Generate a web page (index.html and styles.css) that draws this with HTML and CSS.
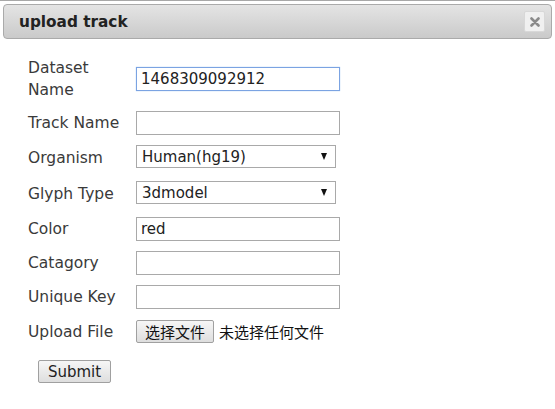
FILE: index.html
```html
<!DOCTYPE html>
<html>
<head>
<meta charset="utf-8">
<link rel="stylesheet" href="styles.css">
</head>
<body>
<div class="dialog">
  <div class="titlebar">
    <span class="title">upload track</span>
    <span class="close"><svg width="10" height="10" viewBox="0 0 10 10"><path d="M1.5 1.5 L8.5 8.5 M8.5 1.5 L1.5 8.5" stroke="#8a8a8a" stroke-width="2.6" stroke-linecap="round"/></svg></span>
  </div>
  <form class="form">
    <div class="grid">
      <label class="lbl two">Dataset<br>Name</label>
      <div class="cell"><input class="txt focus" type="text" value="1468309092912"></div>

      <label class="lbl">Track Name</label>
      <div class="cell"><input class="txt" type="text"></div>

      <label class="lbl sel-row">Organism</label>
      <div class="cell sel-row"><div class="sel"><span>Human(hg19)</span><i class="arrow"></i></div></div>

      <label class="lbl sel-row">Glyph Type</label>
      <div class="cell sel-row"><div class="sel"><span>3dmodel</span><i class="arrow"></i></div></div>

      <label class="lbl">Color</label>
      <div class="cell"><input class="txt" type="text" value="red"></div>

      <label class="lbl">Catagory</label>
      <div class="cell"><input class="txt" type="text"></div>

      <label class="lbl">Unique Key</label>
      <div class="cell"><input class="txt" type="text"></div>

      <label class="lbl file-row">Upload File</label>
      <div class="cell file-row"><span class="btn filebtn">选择文件</span><span class="nofile">未选择任何文件</span></div>
    </div>
    <div class="submit-row"><span class="btn submit">Submit</span></div>
  </form>
</div>
</body>
</html>
```
FILE: styles.css
```css
html, body {
  margin: 0;
  padding: 0;
  background: #fff;
}
body {
  font-family: "DejaVu Sans", Verdana, sans-serif;
  color: #333;
  width: 555px;
  height: 409px;
  overflow: hidden;
}
.dialog {
  border-top: 1px solid #a8a8a8;
  padding: 3px 3px 0 3px;
}
.titlebar {
  height: 33px;
  border: 1px solid #aaa;
  border-radius: 4px;
  background: linear-gradient(#e4e4e4, #cacaca);
  display: flex;
  align-items: center;
  justify-content: space-between;
  padding: 0 6px 0 15px;
}
.title {
  font-weight: bold;
  font-size: 15.3px;
  color: #222;
}
.close {
  width: 19px;
  height: 19px;
  background: #f0f0f0;
  border: 1px solid #d8d8d8;
  border-radius: 2px;
  display: flex;
  align-items: center;
  justify-content: center;
}
.form {
  padding: 18px 0 0 25px;
}
.grid {
  display: grid;
  grid-template-columns: 108px 220px;
  row-gap: 10px;
  align-items: center;
}
.lbl {
  font-size: 15.5px;
  line-height: 22px;
  color: #3a3a3a;
}
.cell {
  display: flex;
  align-items: center;
  height: 24px;
}
.sel-row.cell { height: 26px; align-items: flex-start; }
.file-row.cell { height: 25px; }
.txt {
  box-sizing: border-box;
  width: 204px;
  height: 24px;
  margin: 0;
  border: 1px solid #a9a9a9;
  padding: 0 4px;
  font-family: "DejaVu Sans", Verdana, sans-serif;
  font-size: 15px;
  color: #222;
  outline: none;
}
.txt.focus {
  border: 1px solid #7ba3e2;
  box-shadow: 0 0 1px #9cc0f0;
}
.sel {
  box-sizing: border-box;
  width: 200px;
  height: 23px;
  border: 1px solid #a9a9a9;
  display: flex;
  align-items: center;
  justify-content: space-between;
  padding: 0 8px 0 5px;
  font-size: 15px;
  color: #222;
}
.arrow {
  width: 0;
  height: 0;
  border-left: 3.5px solid transparent;
  border-right: 3.5px solid transparent;
  border-top: 7px solid #111;
}
.btn {
  box-sizing: border-box;
  display: inline-flex;
  align-items: center;
  justify-content: center;
  height: 23px;
  border: 1px solid #a0a0a0;
  border-radius: 2px;
  background: linear-gradient(#f6f6f6, #dedede);
  color: #111;
  font-size: 15px;
}
.filebtn {
  width: 78px;
  font-family: "Noto Sans CJK SC", sans-serif;
  font-size: 15px;
}
.nofile {
  margin-left: 5px;
  font-family: "Noto Sans CJK SC", sans-serif;
  font-size: 15px;
  color: #111;
}
.submit-row {
  padding: 16px 0 0 10px;
}
.submit {
  width: 73px;
  font-family: "DejaVu Sans", Verdana, sans-serif;
  color: #222;
}
```
